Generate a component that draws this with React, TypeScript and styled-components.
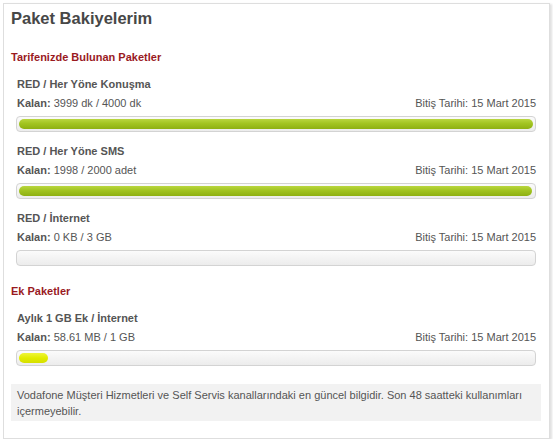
import React from "react";
import styled, { createGlobalStyle } from "styled-components";

const Global = createGlobalStyle`
  html, body { margin: 0; padding: 0; background: #ffffff; }
  body { font-family: "Liberation Sans", Arial, sans-serif; }
`;

const Page = styled.div`
  padding: 3px 3px 0 3px;
  width: 553px;
  box-sizing: border-box;
`;

const Panel = styled.div`
  width: 547px;
  height: 436px;
  box-sizing: border-box;
  border: 1px solid #dedede;
  box-shadow: 2px 1px 2px rgba(0, 0, 0, 0.12);
  padding: 4px 8px 0 7px;
  background: #fff;
`;

const Title = styled.h1`
  margin: 0;
  font-size: 16.5px;
  line-height: 20px;
  font-weight: bold;
  color: #474747;
`;

const SectionTitle = styled.h2<{ $top: number }>`
  margin: ${(p) => p.$top}px 0 11px 0;
  font-size: 11px;
  line-height: 16px;
  font-weight: bold;
  color: #9a1a1f;
`;

const Package = styled.div<{ $last?: boolean }>`
  padding: 0 5px 0 5px;
  margin-bottom: ${(p) => (p.$last ? 0 : 11)}px;
`;

const PackageName = styled.div`
  font-size: 11px;
  line-height: 16px;
  font-weight: bold;
  color: #555;
  padding-left: 1px;
`;

const InfoRow = styled.div`
  margin-top: 3px;
  display: flex;
  justify-content: space-between;
  font-size: 11px;
  line-height: 16px;
  color: #555;
  padding-left: 1px;
`;

const Label = styled.b`
  font-weight: bold;
`;

const Bar = styled.div`
  margin-top: 5px;
  height: 16px;
  box-sizing: border-box;
  border: 1px solid #d3d3d3;
  border-radius: 4px;
  background: linear-gradient(#fbfbfb, #ececec);
  padding: 2px;
`;

const Fill = styled.div<{ $tone: "green" | "yellow" }>`
  height: 10px;
  border-radius: 5px;
  background: ${(p) =>
    p.$tone === "green"
      ? "linear-gradient(#b9d63f 0%, #a2c421 45%, #8eb012 100%)"
      : "linear-gradient(#eef53a 0%, #e2ec00 50%, #d5df00 100%)"};
`;

const Note = styled.div`
  margin-top: 18px;
  background: #f2f2f2;
  padding: 3px 6px 2px 6px;
  font-size: 11px;
  line-height: 16px;
  color: #555;
  width: 530px;
  box-sizing: border-box;
`;

type Item = {
  name: string;
  remain: string;
  pct: number;
  tone: "green" | "yellow";
};

const tariff: Item[] = [
  { name: "RED / Her Yöne Konuşma", remain: "3999 dk / 4000 dk", pct: 3999 / 4000, tone: "green" },
  { name: "RED / Her Yöne SMS", remain: "1998 / 2000 adet", pct: 1998 / 2000, tone: "green" },
  { name: "RED / İnternet", remain: "0 KB / 3 GB", pct: 0, tone: "green" },
];

const extra: Item[] = [
  { name: "Aylık 1 GB Ek / İnternet", remain: "58.61 MB / 1 GB", pct: 58.61 / 1024, tone: "yellow" },
];

const PackageBlock = ({ item, last }: { item: Item; last?: boolean }) => (
  <Package $last={last}>
    <PackageName>{item.name}</PackageName>
    <InfoRow>
      <span>
        <Label>Kalan:</Label> {item.remain}
      </span>
      <span>Bitiş Tarihi: 15 Mart 2015</span>
    </InfoRow>
    <Bar>
      {item.pct > 0 && <Fill $tone={item.tone} style={{ width: `${item.pct * 100}%` }} />}
    </Bar>
  </Package>
);

export default function App() {
  return (
    <>
      <Global />
      <Page>
        <Panel>
          <Title>Paket Bakiyelerim</Title>
          <SectionTitle $top={21}>Tarifenizde Bulunan Paketler</SectionTitle>
          {tariff.map((t, i) => (
            <PackageBlock key={t.name} item={t} last={i === tariff.length - 1} />
          ))}
          <SectionTitle $top={17}>Ek Paketler</SectionTitle>
          {extra.map((t, i) => (
            <PackageBlock key={t.name} item={t} last={i === extra.length - 1} />
          ))}
          <Note>
            Vodafone Müşteri Hizmetleri ve Self Servis kanallarındaki en güncel bilgidir. Son 48 saatteki kullanımları içermeyebilir.
          </Note>
        </Panel>
      </Page>
    </>
  );
}
